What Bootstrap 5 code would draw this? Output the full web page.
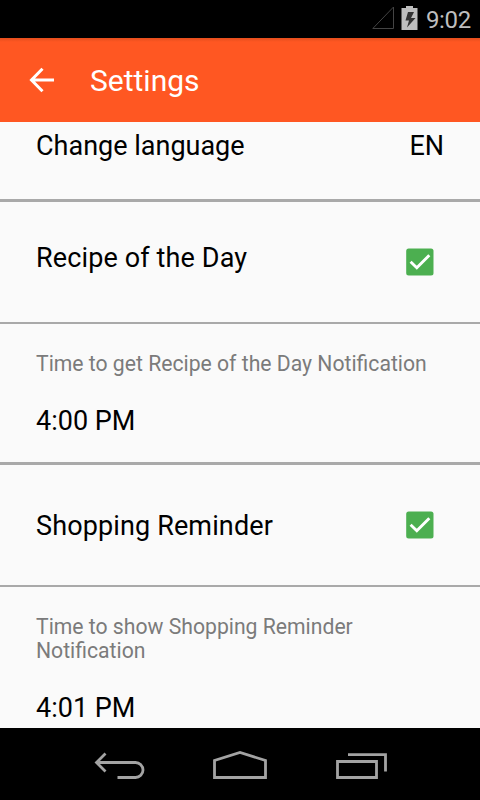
<!DOCTYPE html>
<html lang="en">
<head>
<meta charset="utf-8">
<meta name="viewport" content="width=device-width, initial-scale=1">
<title>Settings</title>
<link href="https://cdn.jsdelivr.net/npm/bootstrap@5.3.0/dist/css/bootstrap.min.css" rel="stylesheet">
<style>
body{font-family:Roboto,"Noto Sans",sans-serif;background:#fafafa;color:#000;height:800px}
.status-bar{height:38px;padding-right:9px;color:#bebebe;font-size:24px;line-height:28px}
.clock{letter-spacing:-.3px;padding-top:1px}
.app-bar{height:84px;background:linear-gradient(#e44e1d,#ff5722 4px);padding:0 27px}
.app-bar h1{font-size:30px;line-height:36px;margin-left:35px;padding-top:1px}
.setting{padding:0 36px;border-bottom:3px solid #a9a9a9;font-size:27px;line-height:32px}
.setting.thin{border-bottom-width:2px}
.language{height:80px;padding-top:8px}
.toggle{height:122px;padding-right:46px}
.toggle span{letter-spacing:.13px;padding-top:2px}
.toggle.raised span{padding:0 0 8px}
.time{height:141px;padding-top:28px}
.caption{font-size:21.18px;line-height:24px;color:#7b7b7b;margin-bottom:29px}
.nav-keys{height:72px}
svg{display:block}
</style>
<script src="https://cdn.jsdelivr.net/npm/bootstrap@5.3.0/dist/js/bootstrap.bundle.min.js"></script>
</head>
<body class="d-flex flex-column overflow-hidden">
<div class="status-bar bg-black d-flex align-items-center justify-content-end flex-shrink-0">
  <svg width="54" height="38" viewBox="0 0 54 38"><path d="M.8 28.500H21.500V7Z" fill="none" stroke="#444"/><path d="M29.500 8H34V6h7v2h4.500v22H29.500Z" fill="#bebebe"/><path d="M36 12h6l-3 6h4.500l-8.500 9.500 2-7h-3.500Z" fill="#333"/></svg>
  <span class="clock">9:02</span>
</div>
<header class="app-bar d-flex align-items-center text-white flex-shrink-0">
  <svg width="28" height="28" viewBox="0 0 28 28"><path d="M27 14H5M15.500 2.700 4.500 14l11 11.300" fill="none" stroke="#fff" stroke-width="3"/></svg>
  <h1 class="fw-normal mb-0">Settings</h1>
</header>
<main class="flex-grow-1 overflow-hidden">
  <div class="setting language d-flex justify-content-between"><span>Change language</span><span>EN</span></div>
  <div class="setting thin toggle raised d-flex align-items-center justify-content-between"><span>Recipe of the Day</span>
    <svg width="28" height="28" viewBox="0 0 28 28"><rect x=".2" y=".4" width="27.300" height="27.200" rx="2.500" fill="#4caf50"/><path d="m4.600 13.800 6.200 6L23.300 7.200" fill="none" stroke="#fff" stroke-width="2.900"/></svg></div>
  <div class="setting time"><p class="caption">Time to get Recipe of the Day Notification</p><div>4:00 PM</div></div>
  <div class="setting thin toggle d-flex align-items-center justify-content-between"><span>Shopping Reminder</span>
    <svg width="28" height="28" viewBox="0 0 28 28"><rect x=".2" y=".4" width="27.300" height="27.200" rx="2.500" fill="#4caf50"/><path d="m4.600 13.800 6.200 6L23.300 7.200" fill="none" stroke="#fff" stroke-width="2.900"/></svg></div>
  <div class="setting time border-0"><p class="caption">Time to show Shopping Reminder Notification</p><div>4:01 PM</div></div>
</main>
<footer class="nav-keys bg-black flex-shrink-0">
  <svg width="480" height="72" viewBox="0 0 480 72" fill="none" stroke="#a3a3a3" stroke-width="2.800">
    <path d="M105.500 25.500 96.500 34.500l9 9M97 34.500h38.500a7.500 7.500 0 0 1 0 15H117.500"/>
    <path d="M214.500 49.500V32.500L240 24.500l25.500 8v17Z"/>
    <path d="M337.500 33.500h39v16h-39ZM348 26.700h37.500V43.500"/>
  </svg>
</footer>
</body>
</html>
